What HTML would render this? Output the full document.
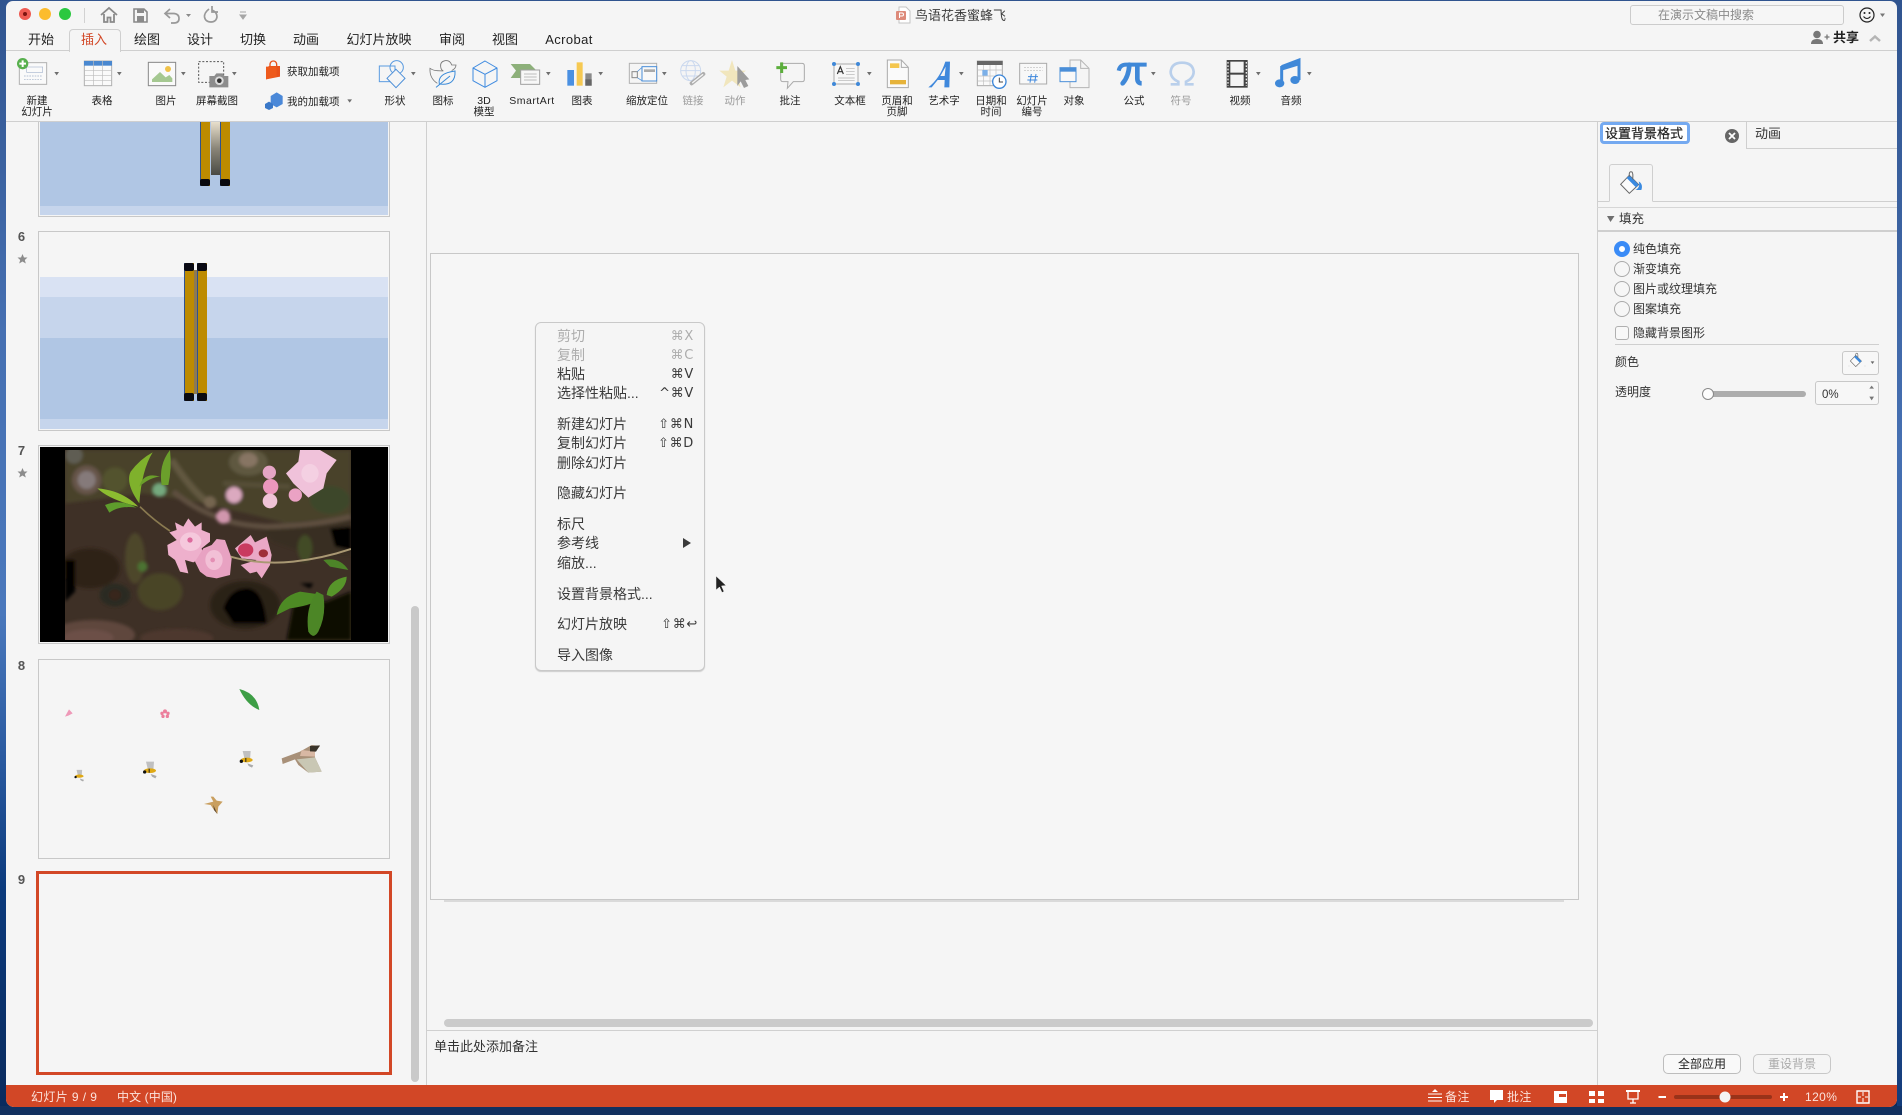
<!DOCTYPE html>
<html lang="zh">
<head>
<meta charset="utf-8">
<title>鸟语花香蜜蜂飞</title>
<style>
html,body{margin:0;padding:0;width:1902px;height:1115px;overflow:hidden;background:#0d2c60}
body{position:relative;font-family:"Liberation Sans","Noto Sans CJK SC",sans-serif;color:#2b2b2b}
div,span,svg{position:absolute}
.t{white-space:nowrap;line-height:14px;height:14px}
.c{transform:translateX(-50%)}
.r{font-size:10.5px;color:#222}
.g{color:#9a9a9a}
.tab{font-size:13px;top:33px;color:#222}
.m{font-size:14px;left:557px;color:#3a3a3a;line-height:16px;height:16px}
.k{font-size:13px;right:1208px;color:#3a3a3a;line-height:16px;height:16px;margin-top:1px;letter-spacing:.7px;font-family:"DejaVu Sans","Liberation Sans",sans-serif}
.dis{color:#adadad}
.p{font-size:12px;color:#333;left:1633px}
.s{font-size:12px;color:#fbe3dc;top:1090px;letter-spacing:.4px}
.n{font:bold 13px/14px "Liberation Sans",sans-serif;color:#555;left:15px;width:13px;text-align:center}
.box{box-sizing:border-box;border:1px solid #c8c8c8}
.rad{box-sizing:border-box;width:16px;height:16px;border:1px solid #aaa;border-radius:50%;left:1614px;background:#f6f6f6}
</style>
</head>
<body>
<!-- desktop -->
<div style="left:0;top:0;width:1902px;height:1115px;background:linear-gradient(180deg,#30548f 0,#4670b2 30%,#4a78bc 55%,#2a5aa0 68%,#0b3a7c 80%,#0a2a5c 100%)"></div>
<div style="left:1897px;top:0;width:5px;height:1115px;background:linear-gradient(180deg,#30548f 0,#4670b2 40%,#2f5ea4 75%,#123a78 100%)"></div>
<div style="left:0;top:1106px;width:1902px;height:9px;background:#12305f"></div>
<!-- window -->
<div style="left:6px;top:1px;width:1891px;height:1106px;background:#f5f5f5;border-radius:7px 7px 8px 8px;overflow:hidden">
  <div style="left:0;top:1084px;width:1891px;height:22px;background:#d24726"></div>
</div>

<!-- horizontal / vertical rules -->
<div style="left:6px;top:50px;width:1891px;height:1px;background:#cfcfcf"></div>
<div style="left:6px;top:121px;width:1891px;height:1px;background:#cfcfcf"></div>
<div style="left:426px;top:122px;width:1px;height:963px;background:#cfcfcf"></div>
<div style="left:1597px;top:122px;width:1px;height:963px;background:#cfcfcf"></div>
<div style="left:427px;top:1030px;width:1170px;height:1px;background:#d0d0d0"></div>

<!-- active tab -->
<div style="left:69px;top:29px;width:50px;height:22px;background:#f5f5f5;border:1px solid #cfcfcf;border-bottom:none;border-radius:4px 4px 0 0"></div>

<!-- thumbnails -->
<div style="left:38px;top:122px;width:352px;height:95px;background:#f5f5f5;overflow:hidden;box-sizing:border-box;border:1px solid #c8c8c8;border-top:none">
  <div style="left:1px;top:0;width:348px;height:84px;background:#b0c6e4"></div>
  <div style="left:1px;top:84px;width:348px;height:9px;background:#c6d5ec"></div>
  <div style="left:172px;top:0;width:10px;height:53px;background:linear-gradient(180deg,#e8dfcc,#8a8578 50%,#4a4a44)"></div>
  <div style="left:161px;top:0;width:10px;height:64px;background:#bd8b00;border-left:1px solid #2f528f;box-sizing:border-box"></div>
  <div style="left:181px;top:0;width:10px;height:64px;background:#bd8b00;border-left:1px solid #2f528f;box-sizing:border-box"></div>
  <div style="left:161px;top:57px;width:10px;height:7px;background:#0a0a10;border-radius:2px"></div>
  <div style="left:181px;top:57px;width:10px;height:7px;background:#0a0a10;border-radius:2px"></div>
</div>
<div class="box" style="left:38px;top:231px;width:352px;height:200px;background:#f5f5f5;overflow:hidden">
  <div style="left:1px;top:45px;width:348px;height:20px;background:#d9e2f3"></div>
  <div style="left:1px;top:65px;width:348px;height:41px;background:#c6d5ec"></div>
  <div style="left:1px;top:106px;width:348px;height:81px;background:#b0c6e4"></div>
  <div style="left:1px;top:187px;width:348px;height:10px;background:#c6d5ec"></div>
  <div style="left:155px;top:38px;width:3px;height:124px;background:#8f7a50"></div>
  <div style="left:145px;top:31px;width:10px;height:138px;background:#bd8b00;border-left:1px solid #2f528f;box-sizing:border-box"></div>
  <div style="left:158px;top:31px;width:10px;height:138px;background:#bd8b00;border-left:1px solid #2f528f;box-sizing:border-box"></div>
  <div style="left:145px;top:31px;width:10px;height:8px;background:#0a0a14;border-radius:2px"></div>
  <div style="left:158px;top:31px;width:10px;height:8px;background:#0a0a14;border-radius:2px"></div>
  <div style="left:145px;top:161px;width:10px;height:8px;background:#0a0a10;border-radius:2px"></div>
  <div style="left:158px;top:161px;width:10px;height:8px;background:#0a0a10;border-radius:2px"></div>
</div>
<div class="box" style="left:38px;top:445px;width:352px;height:199px;background:#f5f5f5">
  <div style="left:1px;top:1px;width:348px;height:195px;background:#000"></div>
</div>
<svg style="left:60px;top:445px" width="295" height="200" viewBox="0 0 885 600">
  <defs><filter id="b1"><feGaussianBlur stdDeviation="5"/></filter></defs>
  <clipPath id="cp"><rect x="15" y="15" width="858" height="570"/></clipPath>
  <g clip-path="url(#cp)">
  <rect x="15" y="15" width="858" height="570" fill="#3e3026"/>
  <g filter="url(#b1)">
  <path d="M15 15H873V225L700 240 560 205 400 170 250 145 15 175Z" fill="#4a432c"/>
  <path d="M600 240L873 215V330H760L640 290Z" fill="#372e20"/>
  <circle cx="80" cy="105" r="44" fill="#665449"/><circle cx="80" cy="105" r="27" fill="#857a7a"/>
  <circle cx="42" cy="30" r="26" fill="#5f5d52"/>
  <circle cx="165" cy="105" r="38" fill="#52522d"/>
  <ellipse cx="565" cy="52" rx="58" ry="40" fill="#5e5840"/><ellipse cx="565" cy="45" rx="28" ry="22" fill="#877563"/>
  <ellipse cx="810" cy="165" rx="60" ry="42" fill="#3c4729"/>
  <ellipse cx="225" cy="340" rx="30" ry="76" fill="#4e472a"/>
  <ellipse cx="300" cy="440" rx="68" ry="56" fill="#484426"/>
  <ellipse cx="735" cy="310" rx="22" ry="40" fill="#434c27"/>
  <ellipse cx="100" cy="570" rx="125" ry="45" fill="#5e463c"/>
  <ellipse cx="85" cy="578" rx="76" ry="25" fill="#6c5047"/>
  <ellipse cx="350" cy="580" rx="110" ry="28" fill="#4d382d"/>
  <ellipse cx="90" cy="370" rx="90" ry="60" fill="#2f2119"/>
  <ellipse cx="165" cy="450" rx="46" ry="34" fill="#2a2a20"/><ellipse cx="165" cy="450" rx="18" ry="16" fill="#38261b"/>
  <ellipse cx="555" cy="480" rx="105" ry="72" fill="#2b2019"/>
  <path d="M490 490Q510 430 560 430 610 430 620 535H520Z" fill="#040404"/>
  <path d="M680 585L700 480 800 470 873 440V585Z" fill="#0a0806"/>
  <path d="M15 345H45V440L15 470Z" fill="#050403"/>
  <path d="M810 250L873 245V315L825 305Z" fill="#050505"/>
  <path d="M720 415H760L750 430Z" fill="#050505"/>
  <path d="M335 45Q390 130 440 170" stroke="#625840" stroke-width="20" fill="none"/>
  <path d="M340 140Q400 190 470 215 520 240 620 245 780 240 873 215" stroke="#5f5041" stroke-width="16" fill="none"/>
  <path d="M490 115L690 125" stroke="#565038" stroke-width="14"/>
  <circle cx="522" cy="150" r="24" fill="#dba9bf"/><circle cx="490" cy="215" r="21" fill="#d196ad"/>
  <circle cx="450" cy="172" r="18" fill="#75654f"/>
  <circle cx="248" cy="365" r="15" fill="#4b7333"/>
  <circle cx="298" cy="135" r="20" fill="#74a97e"/>
  </g>
  <path d="M238 175Q195 115 212 80 240 42 278 22 245 75 238 175Z" fill="#7fb12c"/>
  <path d="M305 120Q295 60 330 15 336 70 325 120Z" fill="#6b9f2b"/>
  <path d="M238 125Q250 80 300 95 270 97 238 125Z" fill="#6a9e2a"/>
  <path d="M235 185Q185 135 112 130 150 165 235 185Z" fill="#8cbc30"/>
  <path d="M230 188Q180 160 135 180L148 203Q180 180 230 188Z" fill="#5e9c2c"/>
  <path d="M240 185Q280 225 330 258" stroke="#8a7a50" stroke-width="5" fill="none"/>
  <path d="M385 220L405 245 425 232 425 255 450 265 450 290 425 310 430 335 400 352 375 345 385 385 360 380 345 345 325 330 322 300 350 285 328 262 350 255 345 232 370 245Z" fill="#eeb0cc"/>
  <path d="M470 282L495 285 515 340 510 390 470 400 440 395 420 380 405 350 430 310 455 300Z" fill="#e8a2c2"/>
  <ellipse cx="392" cy="290" rx="32" ry="28" fill="#f5c8dc"/><circle cx="390" cy="285" r="8" fill="#dc6a9c"/>
  <ellipse cx="462" cy="345" rx="26" ry="30" fill="#f2c0d6"/><circle cx="458" cy="345" r="7" fill="#e48fb4"/>
  <path d="M525 310L572 270 585 292 620 275 635 330 630 360 605 400 590 380 570 385 542 360 590 345 545 340Z" fill="#eaa8c6"/>
  <ellipse cx="557" cy="315" rx="23" ry="20" fill="#c93a60"/><ellipse cx="610" cy="325" rx="14" ry="12" fill="#9e2e38"/>
  <path d="M512 335Q600 360 700 350 790 340 873 312" stroke="#a99873" stroke-width="6" fill="none"/>
  <circle cx="628" cy="82" r="20" fill="#e5a5c5"/><circle cx="632" cy="125" r="23" fill="#ec97bd"/><circle cx="630" cy="168" r="22" fill="#efc2d6"/>
  <path d="M720 15H780L830 45 800 85 790 130 745 158 700 115 678 85 715 50Z" fill="#f0c2da"/>
  <ellipse cx="750" cy="85" rx="26" ry="28" fill="#f4d0e2"/>
  <circle cx="706" cy="150" r="20" fill="#eaa2c4"/>
  <path d="M650 510Q660 455 720 440L790 450Q770 480 690 490Z" fill="#4d8a24"/>
  <path d="M770 440Q735 490 745 560 760 585 775 560 800 510 790 450Z" fill="#4c8626"/>
  <path d="M800 450Q805 405 860 395 860 430 815 455Z" fill="#57952a"/>
  <path d="M790 345Q840 335 865 375L810 365Z" fill="#4d8428"/>
  </g>
</svg>
<div class="box" style="left:38px;top:659px;width:352px;height:200px;background:#f5f5f5"></div>
<div style="box-sizing:border-box;left:36px;top:871px;width:356px;height:204px;border:3px solid #d24726;background:#f5f5f5"></div>
<div class="n t" style="top:230px">6</div>
<div class="n t" style="top:444px">7</div>
<div class="n t" style="top:659px">8</div>
<div class="n t" style="top:873px">9</div>

<!-- slide 8 sprites -->
<svg style="left:0;top:650px" width="440" height="465" viewBox="0 0 1320 1395">
  <path d="M718 117Q770 130 778 180 740 165 718 117Z" fill="#3d9e45"/>
  <path d="M195 200L207 178 218 190 205 197Z" fill="#ee99b8"/>
  <g fill="#ec7f9c"><circle cx="495" cy="184" r="6"/><circle cx="486" cy="190" r="5"/><circle cx="504" cy="190" r="5"/><circle cx="489" cy="199" r="5"/><circle cx="502" cy="199" r="5"/></g>
  <g id="bee">
    <path d="M438 335L462 335 460 362 444 360Z" fill="#c0c0c0"/>
    <path d="M452 372L470 378 466 385 456 380Z" fill="#aaa"/>
    <ellipse cx="450" cy="362" rx="18" ry="7" fill="#e0a914"/>
    <circle cx="434" cy="366" r="5" fill="#111"/><rect x="446" y="356" width="3" height="12" fill="#222"/>
  </g>
  <use href="#bee" transform="translate(290 -32)" />
  <g transform="translate(-77 125) scale(.7)"><path d="M438 335L462 335 460 362 444 360Z" fill="#c0c0c0"/><path d="M452 372L470 378 466 385 456 380Z" fill="#aaa"/><ellipse cx="450" cy="362" rx="18" ry="7" fill="#e0a914"/><circle cx="434" cy="366" r="5" fill="#111"/></g>
  <path d="M845 325L900 305 935 285 960 288 945 305 945 322 965 365 925 368 895 345 885 328 848 342Z" fill="#a89078"/>
  <path d="M890 328L945 322 965 365 925 368Z" fill="#c9c7b4"/>
  <path d="M905 300L945 305 945 320 900 318Z" fill="#d8b8a4"/>
  <path d="M930 288L960 286 948 305 930 304Z" fill="#3a342a"/>
  <path d="M612 462L640 455 632 440 640 440 650 452 668 455 655 470 652 492 642 480 632 465Z" fill="#c99f5f"/>
  <path d="M640 465L652 492 642 480Z" fill="#5a4630"/>
</svg>

<!-- scrollbars -->
<div style="left:411px;top:606px;width:8px;height:476px;background:#c9c9c9;border-radius:4px"></div>
<div style="left:444px;top:1019px;width:1149px;height:8px;background:#cbcbcb;border-radius:4px"></div>

<!-- main slide -->
<div style="left:444px;top:900px;width:1120px;height:2px;background:#dadada"></div>
<div class="box" style="left:430px;top:253px;width:1149px;height:647px;background:#f6f6f6"></div>
<div class="t" style="left:434px;top:1040px;font-size:13px;color:#333">单击此处添加备注</div>

<!-- right panel -->
<div style="left:1746px;top:122px;width:1px;height:26px;background:#cfcfcf"></div>
<div style="left:1746px;top:148px;width:151px;height:1px;background:#cfcfcf"></div>
<div style="box-sizing:border-box;left:1600px;top:122px;width:90px;height:22px;border:3px solid #74a9f0;border-radius:4px;background:#fff"></div>
<div class="t" style="left:1605px;top:127px;font-size:13px;color:#222;-webkit-text-stroke:.2px #222">设置背景格式</div>
<div style="left:1725px;top:129px;width:14px;height:14px;border-radius:50%;background:#666"></div>
<div class="t" style="left:1755px;top:127px;font-size:13px;color:#333">动画</div>
<div style="left:1597px;top:201px;width:300px;height:1px;background:#cfcfcf"></div>
<div style="box-sizing:border-box;left:1609px;top:164px;width:44px;height:38px;border:1px solid #cfcfcf;border-bottom:1px solid #f5f5f5;border-radius:3px 3px 0 0;background:#f5f5f5"></div>
<div style="left:1597px;top:207px;width:300px;height:1px;background:#d6d6d6"></div>
<div style="left:1597px;top:230px;width:300px;height:2px;background:#cfcfcf"></div>
<div class="t" style="left:1619px;top:212px;font-size:12.5px;color:#333">填充</div>
<div class="rad" style="top:241px;border:5px solid #3a8bf6;background:#fff"></div>
<div class="rad" style="top:261px"></div>
<div class="rad" style="top:281px"></div>
<div class="rad" style="top:301px"></div>
<div class="t p" style="top:242px">纯色填充</div>
<div class="t p" style="top:262px">渐变填充</div>
<div class="t p" style="top:282px">图片或纹理填充</div>
<div class="t p" style="top:302px">图案填充</div>
<div style="box-sizing:border-box;left:1615px;top:326px;width:14px;height:14px;border:1px solid #b0b0b0;border-radius:3px;background:#f8f8f8"></div>
<div class="t p" style="top:326px">隐藏背景图形</div>
<div style="left:1615px;top:344px;width:264px;height:1px;background:#cfcfcf"></div>
<div class="t p" style="left:1615px;top:355px">颜色</div>
<div class="box" style="left:1842px;top:351px;width:37px;height:24px;border-radius:3px;background:#f7f7f7"></div>
<div class="t p" style="left:1615px;top:385px">透明度</div>
<div style="left:1704px;top:391px;width:102px;height:6px;border-radius:3px;background:#adadad"></div>
<div style="box-sizing:border-box;left:1702px;top:388px;width:12px;height:12px;border-radius:50%;border:1px solid #8a8a8a;background:#fdfdfd"></div>
<div class="box" style="left:1815px;top:381px;width:64px;height:24px;border-radius:3px;background:#f7f7f7"></div>
<div class="t" style="left:1822px;top:388px;font-size:11.5px;color:#333">0%</div>
<div class="box t" style="left:1663px;top:1054px;width:78px;height:20px;border-radius:5px;border-color:#bdbdbd;background:#f9f9f9;text-align:center;font-size:12px;line-height:18px;color:#222">全部应用</div>
<div class="box t" style="left:1753px;top:1054px;width:78px;height:20px;border-radius:5px;background:#f5f5f5;text-align:center;font-size:12px;line-height:18px;color:#aaa">重设背景</div>

<!-- title bar text -->
<div class="t" style="left:915px;top:9px;font-size:13px;color:#3c3c3c">鸟语花香蜜蜂飞</div>
<div class="box" style="left:1630px;top:5px;width:214px;height:20px;border-radius:3px;border-color:#cccccc;background:#f6f6f6"></div>
<div class="t" style="left:1658px;top:8px;font-size:12px;color:#8a8a8a">在演示文稿中搜索</div>
<div class="t" style="left:1833px;top:31px;font-size:13px;color:#222;font-weight:bold">共享</div>

<!-- tabs -->
<div class="t c tab" style="left:41px">开始</div>
<div class="t c tab" style="left:94px;color:#d24726">插入</div>
<div class="t c tab" style="left:147px">绘图</div>
<div class="t c tab" style="left:200px">设计</div>
<div class="t c tab" style="left:253px">切换</div>
<div class="t c tab" style="left:306px">动画</div>
<div class="t c tab" style="left:379px">幻灯片放映</div>
<div class="t c tab" style="left:452px">审阅</div>
<div class="t c tab" style="left:505px">视图</div>
<div class="t c tab" style="left:569px;letter-spacing:.4px">Acrobat</div>

<!-- ribbon labels -->
<div class="t c r" style="left:37px;top:94px">新建</div><div class="t c r" style="left:37px;top:105px">幻灯片</div>
<div class="t c r" style="left:102px;top:94px">表格</div>
<div class="t c r" style="left:166px;top:94px">图片</div>
<div class="t c r" style="left:217px;top:94px">屏幕截图</div>
<div class="t r" style="left:287px;top:65px">获取加载项</div>
<div class="t r" style="left:287px;top:95px">我的加载项</div>
<div class="t c r" style="left:395px;top:94px">形状</div>
<div class="t c r" style="left:443px;top:94px">图标</div>
<div class="t c r" style="left:484px;top:94px">3D</div><div class="t c r" style="left:484px;top:105px">模型</div>
<div class="t c r" style="left:532px;top:94px;letter-spacing:.5px">SmartArt</div>
<div class="t c r" style="left:582px;top:94px">图表</div>
<div class="t c r" style="left:647px;top:94px">缩放定位</div>
<div class="t c r g" style="left:693px;top:94px">链接</div>
<div class="t c r g" style="left:735px;top:94px">动作</div>
<div class="t c r" style="left:790px;top:94px">批注</div>
<div class="t c r" style="left:850px;top:94px">文本框</div>
<div class="t c r" style="left:897px;top:94px">页眉和</div><div class="t c r" style="left:897px;top:105px">页脚</div>
<div class="t c r" style="left:944px;top:94px">艺术字</div>
<div class="t c r" style="left:991px;top:94px">日期和</div><div class="t c r" style="left:991px;top:105px">时间</div>
<div class="t c r" style="left:1032px;top:94px">幻灯片</div><div class="t c r" style="left:1032px;top:105px">编号</div>
<div class="t c r" style="left:1074px;top:94px">对象</div>
<div class="t c r" style="left:1134px;top:94px">公式</div>
<div class="t c r g" style="left:1181px;top:94px">符号</div>
<div class="t c r" style="left:1240px;top:94px">视频</div>
<div class="t c r" style="left:1291px;top:94px">音频</div>

<!-- context menu -->
<div style="box-sizing:border-box;left:535px;top:322px;width:170px;height:349px;background:#f5f5f5;border:1px solid #c9c9c9;border-radius:6px;box-shadow:0 1px 1px #ccc"></div>
<div class="t m dis" style="top:328px">剪切</div><div class="t k dis" style="top:328px">⌘X</div>
<div class="t m dis" style="top:347px">复制</div><div class="t k dis" style="top:347px">⌘C</div>
<div class="t m" style="top:366px">粘贴</div><div class="t k" style="top:366px">⌘V</div>
<div class="t m" style="top:385px">选择性粘贴...</div><div class="t k" style="top:385px">^⌘V</div>
<div class="t m" style="top:416px">新建幻灯片</div><div class="t k" style="top:416px">⇧⌘N</div>
<div class="t m" style="top:435px">复制幻灯片</div><div class="t k" style="top:435px">⇧⌘D</div>
<div class="t m" style="top:455px">删除幻灯片</div>
<div class="t m" style="top:485px">隐藏幻灯片</div>
<div class="t m" style="top:516px">标尺</div>
<div class="t m" style="top:535px">参考线</div>
<div class="t m" style="top:555px">缩放...</div>
<div class="t m" style="top:586px">设置背景格式...</div>
<div class="t m" style="top:616px">幻灯片放映</div><div class="t k" style="top:616px;right:1204px">⇧⌘↩</div>
<div class="t m" style="top:647px">导入图像</div>

<!-- status bar text -->
<div class="t s" style="left:31px">幻灯片 9 / 9</div>
<div class="t s" style="left:117px;letter-spacing:.1px">中文 (中国)</div>
<div class="t s" style="left:1445px">备注</div>
<div class="t s" style="left:1507px">批注</div>
<div class="t s" style="left:1805px">120%</div>

<!-- icons overlay -->
<svg style="left:0;top:0;pointer-events:none" width="1902" height="1115" viewBox="0 0 1902 1115" fill="none">
  <!-- traffic lights -->
  <circle cx="25" cy="14" r="6" fill="#ee5b52"/><circle cx="25" cy="14" r="2" fill="#7d1410"/>
  <circle cx="45" cy="14" r="6" fill="#fcbc2d"/>
  <circle cx="65" cy="14" r="6" fill="#2bc840"/>
  <path d="M84.500 8V23" stroke="#d2d2d2"/>
  <!-- home -->
  <path d="M101 15L109 8 117 15M104 14V22H107.500V17.500H110.500V22H114V14" stroke="#8a8a8a" stroke-width="1.800"/>
  <!-- save -->
  <path d="M134 9H144L147 12V22H134Z" stroke="#8a8a8a" stroke-width="1.600"/>
  <rect x="137" y="9" width="7" height="4" fill="#8a8a8a"/><rect x="137" y="16" width="7" height="6" fill="#8a8a8a"/>
  <!-- undo / redo -->
  <path d="M170 9L165 13.500 170 18M165 13.500H174Q179 14 179 18.500T174 23H171" stroke="#999" stroke-width="1.700"/>
  <path d="M186 14H191L188.500 17Z" fill="#8a8a8a"/>
  <path d="M209 10Q204 14 204.500 18 205.500 23 211 23 216 23 217 18 217 13 212 11M212 7V13H218" stroke="#999" stroke-width="1.700" transform="translate(0 -1)"/>
  <path d="M240 12H246M240 15H246L243 19Z" stroke="#a5a5a5" fill="#a5a5a5"/>
  <!-- title doc icon -->
  <path d="M899 7H906L910 11V23H899Z" stroke="#c4c4c4" fill="#fff"/>
  <rect x="896" y="11" width="10" height="9" rx="1" fill="#dd8a7a"/>
  <path d="M899.500 18V13H902Q903.500 13 903.500 14.500T902 16H899.500" stroke="#fff" stroke-width="1"/>
  <!-- smiley & share -->
  <circle cx="1867" cy="15" r="7" stroke="#222" stroke-width="1.200"/><circle cx="1864.500" cy="13" r="1" fill="#222"/><circle cx="1869.500" cy="13" r="1" fill="#222"/><path d="M1863.500 16.500Q1867 20.500 1870.500 16.500" stroke="#222"/>
  <path d="M1880 13.500H1885L1882.500 17Z" fill="#777"/>
  <circle cx="1817" cy="34.500" r="3.800" fill="#777"/><path d="M1811 44Q1811 39 1817 39 1823 39 1823 44Z" fill="#777"/>
  <path d="M1824.500 37H1829.500M1827 34.500V39.500" stroke="#777" stroke-width="1.300"/>
  <path d="M1870 41L1875 36.500 1880 41" stroke="#b5b5b5" stroke-width="2.500"/>

  <!-- group 1 -->
  <g transform="translate(0 50) scale(.33333)">
    <rect x="58" y="38" width="82" height="65" fill="#fafafa" stroke="#b0b0b0" stroke-width="3"/>
    <rect x="80" y="51" width="48" height="16" stroke="#aab8d0" stroke-width="2"/>
    <path d="M72 78H128M72 88H128" stroke="#a0b0c8" stroke-width="2" stroke-dasharray="5 3"/>
    <circle cx="68" cy="41" r="17" fill="#58b04e"/><path d="M68 31V51M58 41H78" stroke="#fff" stroke-width="6"/>
    <path d="M163 66H177L170 76Z" fill="#6e6e6e"/>
    <rect x="253" y="33" width="82" height="74" fill="#fafafa" stroke="#b0b0b0" stroke-width="3"/>
    <rect x="252" y="33" width="84" height="14" fill="#4a88d0"/>
    <path d="M280 33V107M308 33V107M253 62H335M253 77H335M253 92H335" stroke="#bdbdbd" stroke-width="2"/>
    <path d="M351 66H365L358 76Z" fill="#6e6e6e"/>
    <rect x="445" y="37" width="82" height="70" fill="#fafafa" stroke="#888" stroke-width="3"/>
    <circle cx="504" cy="57" r="9" fill="#f0c24a"/>
    <path d="M456 96V88L480 66 497 82 508 75 517 85V96Z" fill="#a5c891"/>
    <path d="M543 66H557L550 76Z" fill="#6e6e6e"/>
    <rect x="596" y="35" width="75" height="62" stroke="#555" stroke-width="3" stroke-dasharray="6 5"/>
    <path d="M628 78H643L649 70H668L673 78H685V112H628Z" fill="#8d8d8d"/>
    <circle cx="658" cy="92" r="13" fill="#ddd"/><circle cx="658" cy="92" r="7" fill="#333"/>
    <path d="M696 66H710L703 76Z" fill="#6e6e6e"/>
    <path d="M806 48H840V80L798 88Z" fill="#e8511a"/>
    <path d="M798 50H830V80L798 88Z" fill="#ee5a1c"/>
    <path d="M810 50V42Q812 33 820 33 828 33 830 42V50" stroke="#e8511a" stroke-width="4"/>
    <path d="M830 127L848 138V162L830 172 812 162V138Z" fill="#4a88d8"/>
    <path d="M807 155L819 162V174L807 180 795 174V162Z" fill="#3a78c8"/>
    <path d="M1042 148H1056L1049 158Z" fill="#6e6e6e"/>
  </g>
  <!-- group 2 -->
  <g transform="translate(350 50) scale(.33333)" stroke-width="3">
    <rect x="88" y="48" width="47" height="47" stroke="#5a9be0" fill="#f5f5f5"/>
    <circle cx="140" cy="52" r="20" stroke="#5a9be0"/>
    <path d="M138 58L165 85 138 113 111 85Z" stroke="#4a8ed8" fill="#f5f5f5"/>
    <path d="M183 66H197L190 76Z" fill="#6e6e6e"/>
    <path d="M305 62Q318 55 318 45L305 45Q300 30 285 32 270 35 272 50 273 60 280 63L262 62Q250 62 240 55 238 85 262 100" stroke="#777" stroke-width="2.500"/>
    <path d="M268 102Q262 70 315 63 318 108 268 102ZM258 112L300 78" stroke="#3a8ad8" stroke-width="3"/>
    <path d="M405 33L441 54V92L405 112 369 92V54ZM369 54L405 73 441 54M405 73V112" stroke="#3f8be0"/>
    <path d="M482 42H540L558 60 540 72 512 72 512 84 482 84 498 62Z" fill="#8db07a"/>
    <rect x="512" y="60" width="57" height="43" fill="#f7f7f7" stroke="#a0a0a0"/>
    <path d="M522 72H560M522 81H560M522 90H560" stroke="#aaa" stroke-width="2"/>
    <path d="M588 66H602L595 76Z" fill="#6e6e6e"/>
    <rect x="652" y="60" width="20" height="47" fill="#4a90e2"/>
    <rect x="680" y="37" width="18" height="70" fill="#f6c952"/>
    <rect x="706" y="70" width="19" height="37" fill="#8a8a8a"/><rect x="706" y="88" width="19" height="19" fill="#666"/>
    <path d="M745 66H759L752 76Z" fill="#6e6e6e"/>
    <rect x="838" y="40" width="82" height="60" stroke="#b0b0b0"/>
    <rect x="876" y="50" width="44" height="43" stroke="#4a8ed8" fill="#f8f8f8"/>
    <rect x="882" y="58" width="33" height="8" fill="#aaa" stroke="none"/>
    <rect x="846" y="65" width="16" height="18" stroke="#888"/><path d="M862 65L876 52M862 83L876 92" stroke="#4a8ed8" stroke-width="2"/>
    <path d="M936 66H950L943 76Z" fill="#6e6e6e"/>
    <circle cx="1022" cy="62" r="30" stroke="#cad8ee"/><ellipse cx="1022" cy="62" rx="14" ry="30" stroke="#cad8ee"/><path d="M992 62H1052M997 47H1047M997 78H1047" stroke="#cad8ee"/>
    <path d="M1025 100L1060 72" stroke="#aeaeae" stroke-width="12" stroke-linecap="round"/><path d="M1028 98L1058 74" stroke="#f5f5f5" stroke-width="4" stroke-linecap="round"/>
    <path d="M1146 30L1156 62 1188 62 1163 80 1172 112 1146 92 1120 112 1130 80 1108 62 1136 62Z" fill="#f1e6bd"/>
    <path d="M1162 48V108L1172 94 1182 114 1195 108 1186 90 1198 88Z" fill="#9c9c9c"/>
  </g>
  <!-- group 3 -->
  <g transform="translate(760 50) scale(.33333)" stroke-width="3">
    <path d="M64 40H126Q133 40 133 47V88Q133 95 126 95H100L82 115 84 95H70Q62 95 62 88V40Z" stroke="#aaa"/>
    <path d="M65 37V69M49 53H81" stroke="#5cae3c" stroke-width="9"/>
    <rect x="222" y="42" width="72" height="60" fill="#f8f8f8" stroke="#aaa"/>
    <circle cx="222" cy="42" r="6" fill="#3f88d8"/><circle cx="294" cy="42" r="6" fill="#3f88d8"/><circle cx="222" cy="102" r="6" fill="#3f88d8"/><circle cx="294" cy="102" r="6" fill="#3f88d8"/>
    <path d="M232 72L241 50 250 72M235 65H247" stroke="#333" stroke-width="3.500"/>
    <path d="M258 55H284M258 64H284M258 74H284M234 84H284M234 92H284" stroke="#b0b0b0" stroke-width="2"/>
    <path d="M321 66H335L328 76Z" fill="#6e6e6e"/>
    <path d="M382 30H424L445 52V113H382Z" fill="#fafafa" stroke="#aaa"/><path d="M424 30V52H445" stroke="#aaa"/>
    <rect x="390" y="40" width="28" height="14" fill="#f4c64e"/><rect x="390" y="90" width="48" height="13" fill="#e6b33a"/>
    <path fill-rule="evenodd" d="M505 112Q540 85 556 35H570L568 112H553L554 90H533L515 112ZM541 78H554L557 50Z" fill="#3f88dc"/>
    <path d="M597 66H611L604 76Z" fill="#6e6e6e"/>
    <rect x="652" y="33" width="75" height="74" fill="#fafafa" stroke="#aaa"/><rect x="651" y="33" width="77" height="12" fill="#666"/>
    <path d="M670 45V107M690 45V107M708 45V107M652 60H727M652 78H727M652 93H727" stroke="#c0c0c0" stroke-width="2"/>
    <rect x="667" y="60" width="16" height="17" fill="#7cb0e8"/>
    <circle cx="718" cy="95" r="20" fill="#fff" stroke="#3a85d8" stroke-width="4"/><path d="M718 83V96H729" stroke="#444" stroke-width="3"/>
    <rect x="779" y="40" width="81" height="62" fill="#f8f8f8" stroke="#aaa"/>
    <path d="M792 53H848M792 62H848" stroke="#bbb" stroke-width="2" stroke-dasharray="6 3"/>
    <path d="M814 72L810 98M828 72L824 98M804 80H834M802 90H832" stroke="#3f88dc" stroke-width="3"/>
  </g>
  <!-- group 4 -->
  <g transform="translate(1050 50) scale(.33333)" stroke-width="3">
    <path d="M60 30H92L117 55V113H60Z" stroke="#b5b5b5"/><path d="M92 30V55H117" stroke="#b5b5b5"/>
    <rect x="30" y="53" width="48" height="42" fill="#f8f8f8" stroke="#4a8ed8"/><rect x="30" y="53" width="48" height="12" fill="#4a8ed8"/>
    <path d="M206 62Q210 44 228 44H290" stroke="#3f88d8" stroke-width="12"/>
    <path d="M238 44Q236 80 218 100" stroke="#3f88d8" stroke-width="14" stroke-linecap="round"/>
    <path d="M262 44V85Q262 100 275 100" stroke="#3f88d8" stroke-width="14"/>
    <path d="M303 66H317L310 76Z" fill="#6e6e6e"/>
    <path d="M362 103H385V95Q362 85 362 65 365 38 396 38 428 38 431 65 431 85 408 95V103H431" stroke="#b9cfeb" stroke-width="8"/>
    <rect x="530" y="30" width="63" height="83" fill="#444"/>
    <rect x="541" y="35" width="40" height="33" fill="#f4f4f4"/><rect x="541" y="74" width="40" height="34" fill="#f4f4f4"/>
    <path d="M534 36V108M589 36V108" stroke="#eee" stroke-width="4" stroke-dasharray="5 5"/>
    <path d="M618 66H632L625 76Z" fill="#6e6e6e"/>
    <path d="M695 50L747 30V90" stroke="#3f88d8" stroke-width="9"/><path d="M695 48V98" stroke="#3f88d8" stroke-width="9"/><path d="M695 46L747 30V46L695 62Z" fill="#3f88d8"/>
    <ellipse cx="689" cy="100" rx="14" ry="12" fill="#3f88d8"/><ellipse cx="735" cy="90" rx="14" ry="12" fill="#3f88d8"/>
    <path d="M771 66H785L778 76Z" fill="#6e6e6e"/>
  </g>

  <!-- menu arrow -->
  <path d="M683 538L691 543 683 548Z" fill="#3a3a3a"/>
  <!-- pointer -->
  <path d="M716 576V590L719.500 587 722 592.500 724 591.500 721.500 586 726 585.500Z" fill="#222" stroke="#eee" stroke-width=".5"/>

  <!-- stars -->
  <path d="M22.500 254L24 257.500H27.500L24.800 260 25.800 263.500 22.500 261.500 19.200 263.500 20.200 260 17.500 257.500H21Z" fill="#8c8c8c"/>
  <path d="M22.500 468L24 471.500H27.500L24.800 474 25.800 477.500 22.500 475.500 19.200 477.500 20.200 474 17.500 471.500H21Z" fill="#8c8c8c"/>

  <!-- panel icons -->
  <path d="M1729 133L1735 139M1735 133L1729 139" stroke="#fff" stroke-width="1.800"/>
  <path d="M1607 216H1614.500L1610.500 222Z" fill="#6e6e6e"/>
  <g transform="translate(1590 0) scale(.33333)">
    <path d="M92 553L118 526 146 554 118 580Z" fill="#fbfbfb" stroke="#666" stroke-width="3"/>
    <path d="M110 534L118 526 146 554 138 562Z" fill="#3a8ae0"/>
    <path d="M118 530Q116 512 126 516 130 520 128 538" stroke="#666" stroke-width="3"/>
    <path d="M136 570Q152 562 146 544 160 552 154 570Z" fill="#3a8ae0"/>
    <g transform="translate(724 740) scale(.62)">
      <path d="M92 553L118 526 146 554 118 580Z" fill="#fbfbfb" stroke="#666" stroke-width="3"/>
      <path d="M110 534L118 526 146 554 138 562Z" fill="#3a8ae0"/>
      <path d="M118 530Q116 512 126 516 130 520 128 538" stroke="#666" stroke-width="3"/>
    </g>
    <path d="M776 1098H830" stroke="#bbb" stroke-width="2" stroke-dasharray="2 22"/>
    <path d="M842 1084H853L847.500 1092Z" fill="#666"/>
    <path d="M838 1166L845 1157 852 1166ZM838 1190L845 1201 852 1190Z" fill="#777"/>
  </g>

  <!-- status icons -->
  <g stroke="#fff" fill="#fff">
    <path d="M1428 1094H1442M1428 1097.500H1442M1428 1101H1442" stroke-width="1"/><path d="M1432 1092L1435 1089 1438 1092Z" stroke="none"/>
    <path d="M1490 1090H1503V1100H1497L1494 1103V1100H1490Z" stroke="none"/>
    <path d="M1554 1091H1567V1103H1554Z" stroke="none"/>
    <path d="M1589 1091H1595V1096H1589ZM1598 1091H1604V1096H1598ZM1589 1099H1595V1103H1589ZM1598 1099H1604V1103H1598Z" stroke="none"/>
    <path d="M1626 1091H1640" stroke-width="2"/><path d="M1628 1091V1099H1638V1091" fill="none" stroke-width="1.300"/><path d="M1633 1099V1103M1630 1103H1636" stroke-width="1.300"/>
    <path d="M1658.500 1097H1666" stroke-width="2"/>
    <path d="M1780 1097H1788M1784 1093V1101" stroke-width="2"/>
    <path d="M1857 1091H1869V1103H1857Z" fill="none" stroke-width="1.400"/>
    <path d="M1863 1092V1096M1863 1098V1102M1858 1097H1861M1865 1097H1868" stroke-width="1"/>
  </g>
  <path d="M1559 1094H1566V1097H1559Z" fill="#d24726"/>
  <rect x="1674" y="1095" width="98" height="4" rx="2" fill="#993219"/>
  <circle cx="1725" cy="1097" r="5.500" fill="#f4f4f4"/>
</svg>
</body>
</html>
